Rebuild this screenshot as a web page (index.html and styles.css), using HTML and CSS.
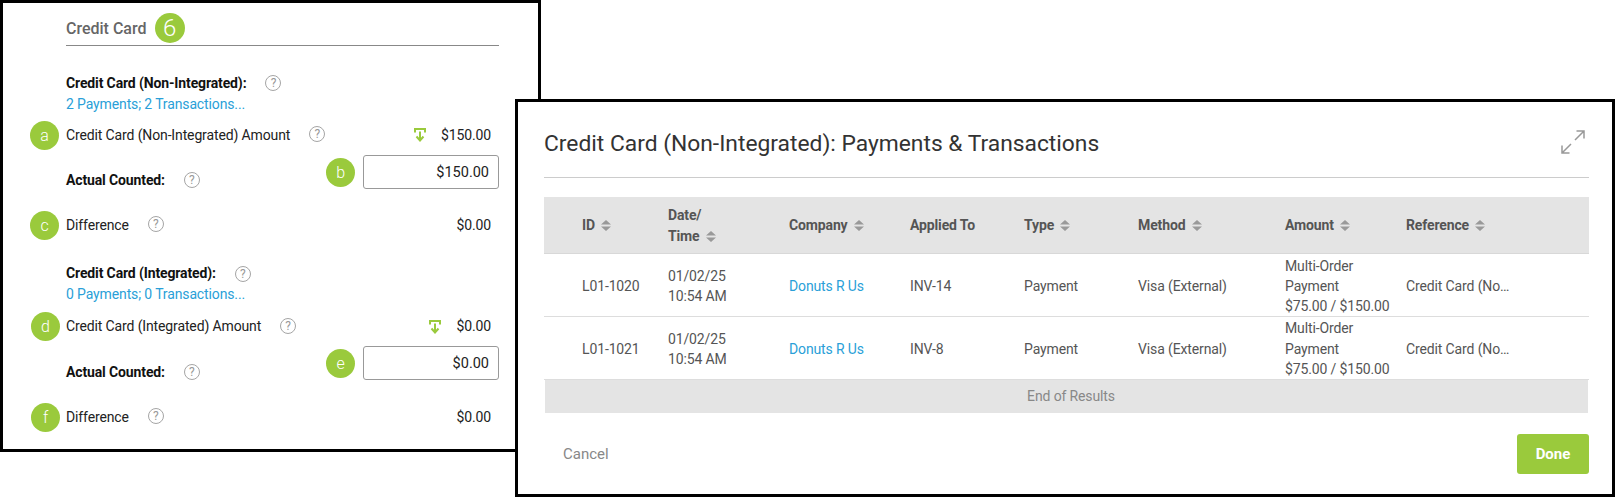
FILE: index.html
```html
<!DOCTYPE html>
<html lang="en">
<head>
  <meta charset="UTF-8" />
  <title>Credit Card Payments</title>
  <link rel="stylesheet" href="styles.css">
</head>
<body>

  <svg class="defs" width="0" height="0">
    <symbol id="sort" viewBox="0 0 10 11">
      <path d="M5 0 L10 4.6 H0 Z M0 6.4 H10 L5 11 Z" />
    </symbol>
    <symbol id="pull" viewBox="0 0 12 14">
      <path d="M1 4.5 V1 H11 V4.5 M6 3.5 V12 M2.5 8.5 L6 12.5 L9.5 8.5" />
    </symbol>
  </svg>

  <!-- Credit card section -->
  <section class="panel">
    <div class="section-title">
      <h2>Credit Card</h2>
      <span class="badge badge-big">6</span>
    </div>

    <div class="group">
      <div class="head">Credit Card (Non-Integrated): <span class="help">?</span></div>
      <a class="link" href="#">2 Payments; 2 Transactions...</a>
      <div class="row amount-row">
        <div class="label-side">
          <span class="badge">a</span>
          <span>Credit Card (Non-Integrated) Amount</span>
          <span class="help">?</span>
        </div>
        <div class="value"><svg class="pull"><use href="#pull" /></svg>$150.00</div>
      </div>
      <div class="row count-row">
        <div class="head count-label">Actual Counted: <span class="help">?</span></div>
        <div class="count-side">
          <span class="badge">b</span>
          <input class="count-input" type="text" value="$150.00" />
        </div>
      </div>
      <div class="row diff-row">
        <div class="label-side">
          <span class="badge">c</span>
          <span>Difference</span>
          <span class="help">?</span>
        </div>
        <div class="value">$0.00</div>
      </div>
    </div>

    <div class="group group-second">
      <div class="head">Credit Card (Integrated): <span class="help">?</span></div>
      <a class="link" href="#">0 Payments; 0 Transactions...</a>
      <div class="row amount-row">
        <div class="label-side">
          <span class="badge">d</span>
          <span>Credit Card (Integrated) Amount</span>
          <span class="help">?</span>
        </div>
        <div class="value"><svg class="pull"><use href="#pull" /></svg>$0.00</div>
      </div>
      <div class="row count-row">
        <div class="head count-label">Actual Counted: <span class="help">?</span></div>
        <div class="count-side">
          <span class="badge">e</span>
          <input class="count-input" type="text" value="$0.00" />
        </div>
      </div>
      <div class="row diff-row">
        <div class="label-side">
          <span class="badge">f</span>
          <span>Difference</span>
          <span class="help">?</span>
        </div>
        <div class="value">$0.00</div>
      </div>
    </div>
  </section>

  <!-- Payments modal -->
  <section class="modal">
    <div class="modal-head">
      <h1>Credit Card (Non-Integrated): Payments &amp; Transactions</h1>
      <svg class="expand" viewBox="0 0 24 24">
        <path d="M14 10 L23 1 M15.5 1 H23 V8.5 M10 14 L1 23 M1 15.5 V23 H8.5" />
      </svg>
    </div>

    <table class="results">
      <colgroup>
        <col class="c-id"><col class="c-date"><col class="c-company"><col class="c-applied">
        <col class="c-type"><col class="c-method"><col class="c-amount"><col class="c-ref">
      </colgroup>
      <thead>
        <tr>
          <th>ID <svg class="sort"><use href="#sort" /></svg></th>
          <th>Date/<br>Time <svg class="sort"><use href="#sort" /></svg></th>
          <th>Company <svg class="sort"><use href="#sort" /></svg></th>
          <th>Applied To</th>
          <th>Type <svg class="sort"><use href="#sort" /></svg></th>
          <th>Method <svg class="sort"><use href="#sort" /></svg></th>
          <th>Amount <svg class="sort"><use href="#sort" /></svg></th>
          <th>Reference <svg class="sort"><use href="#sort" /></svg></th>
        </tr>
      </thead>
      <tbody>
        <tr>
          <td>L01-1020</td>
          <td>01/02/25<br>10:54 AM</td>
          <td><a class="link" href="#">Donuts R Us</a></td>
          <td>INV-14</td>
          <td>Payment</td>
          <td>Visa (External)</td>
          <td>Multi-Order<br>Payment<br>$75.00 / $150.00</td>
          <td>Credit Card (No…</td>
        </tr>
        <tr>
          <td>L01-1021</td>
          <td>01/02/25<br>10:54 AM</td>
          <td><a class="link" href="#">Donuts R Us</a></td>
          <td>INV-8</td>
          <td>Payment</td>
          <td>Visa (External)</td>
          <td>Multi-Order<br>Payment<br>$75.00 / $150.00</td>
          <td>Credit Card (No…</td>
        </tr>
      </tbody>
    </table>
    <div class="end-results">End of Results</div>

    <div class="modal-foot">
      <button class="cancel">Cancel</button>
      <button class="done">Done</button>
    </div>
  </section>

</body>
</html>
```

FILE: styles.css
```css
* {
  box-sizing: border-box;
  margin: 0;
  padding: 0;
  font-family: 'Roboto', sans-serif;
}

body {
  background: #fff;
  width: 1615px;
  height: 497px;
  position: relative;
  overflow: hidden;
  font-size: 14px;
  letter-spacing: -0.13px;
  line-height: 21px;
  color: #222;
}

.defs {
  position: absolute;
}

a {
  text-decoration: none;
}

.link {
  color: #2a9fd8;
}

/* Left panel */
.panel {
  position: absolute;
  left: 0;
  top: 0;
  width: 541px;
  height: 452px;
  background: #fff;
  border: 3px solid #000;
  padding: 10px 39px 0 63px;
}

.section-title {
  display: flex;
  align-items: center;
  gap: 8px;
  height: 33px;
  padding-bottom: 2px;
  border-bottom: 1px solid #888;
}

.section-title h2 {
  font-size: 16px;
  font-weight: 500;
  letter-spacing: 0;
  color: #666;
}

.badge {
  flex: none;
  display: flex;
  align-items: center;
  justify-content: center;
  width: 29px;
  height: 29px;
  border-radius: 50%;
  background: #9aca3c;
  color: #fff;
  font-size: 16px;
  font-weight: 300;
}

.badge-big {
  width: 30px;
  height: 30px;
  font-size: 24px;
}

.group {
  margin-top: 26.5px;
}

.group-second {
  margin-top: 27.5px;
}

.head {
  font-weight: 700;
  color: #111;
  display: flex;
  align-items: center;
  gap: 19px;
  height: 21px;
}

.group > .link {
  display: block;
  height: 21px;
}

.help {
  flex: none;
  display: flex;
  align-items: center;
  justify-content: center;
  width: 16px;
  height: 16px;
  border: 1.5px solid #a5a5a5;
  border-radius: 50%;
  color: #999;
  font-size: 12px;
  font-weight: 400;
  line-height: 1;
}

.row {
  display: flex;
  justify-content: space-between;
}

.amount-row {
  margin-top: 10px;
  align-items: center;
  height: 21px;
}

.count-row {
  margin-top: 9.5px;
  height: 34px;
}

.diff-row {
  margin-top: 25.5px;
  align-items: center;
  height: 21px;
}

.group-second .amount-row {
  margin-top: 11px;
}

.group-second .count-row {
  margin-top: 9px;
}

.group-second .count-label {
  margin-top: 15.5px;
}

.group-second .diff-row {
  margin-top: 26.5px;
}

.label-side {
  display: flex;
  align-items: center;
  margin-left: -36px;
}

.label-side .badge {
  margin-right: 7px;
}

.label-side .help {
  margin-left: 19px;
  margin-top: -2px;
}

.group-second .label-side {
  margin-left: -35px;
}

.group-second .label-side .badge {
  margin-right: 6px;
}

.count-label {
  margin-top: 14.5px;
}

.count-side {
  display: flex;
  align-items: center;
  gap: 8px;
}

.count-input {
  width: 136px;
  height: 34px;
  border: 1px solid #999;
  border-radius: 3px;
  padding: 0 9px;
  text-align: right;
  font-size: 14.5px;
  color: #222;
  background: #fff;
}

.value {
  display: flex;
  align-items: center;
  padding-right: 8px;
}

.pull {
  width: 12px;
  height: 14px;
  margin-right: 15px;
  fill: none;
  stroke: #9aca3c;
  stroke-width: 2;
}

/* Modal */
.modal {
  position: absolute;
  left: 515px;
  top: 99px;
  width: 1100px;
  height: 398px;
  background: #fff;
  border: 3px solid #000;
  padding: 0 23px 0 26px;
  color: #555;
}

.modal-head {
  display: flex;
  justify-content: space-between;
  align-items: center;
  height: 76px;
  padding: 8px 4px 0 0;
  border-bottom: 1px solid #ccc;
}

.modal-head h1 {
  font-size: 22.8px;
  font-weight: 400;
  letter-spacing: 0;
  color: #333;
}

.expand {
  width: 24px;
  height: 24px;
  margin-top: -3px;
  fill: none;
  stroke: #999;
  stroke-width: 1.5;
}

.results {
  width: 1045px;
  margin-top: 19px;
  table-layout: fixed;
  border-collapse: collapse;
}

.c-id { width: 124px; }
.c-date { width: 121px; }
.c-company { width: 121px; }
.c-applied { width: 114px; }
.c-type { width: 114px; }
.c-method { width: 147px; }
.c-amount { width: 121px; }
.c-ref { width: 183px; }

.results th {
  height: 56px;
  padding-top: 2px;
  background: #e4e4e4;
  border-bottom: 1px solid #d8d8d8;
  text-align: left;
  font-weight: 700;
  color: #555;
}

.results td {
  padding-top: 2px;
  line-height: 20.33px;
  border-bottom: 1px solid #ddd;
}

.results tbody tr:last-child td {
  padding-top: 1px;
}

.results th:first-child,
.results td:first-child {
  padding-left: 38px;
}

.sort {
  width: 10px;
  height: 11px;
  margin-left: 3px;
  vertical-align: -1px;
  fill: #999;
}

.end-results {
  width: 1043px;
  margin-left: 1px;
  height: 33px;
  line-height: 33px;
  padding-left: 9px;
  background: #e4e4e4;
  color: #888;
  text-align: center;
}

.modal-foot {
  display: flex;
  justify-content: space-between;
  align-items: center;
  margin-top: 21px;
}

button {
  border: none;
  font-size: 15px;
  cursor: pointer;
}

.cancel {
  margin-left: 19px;
  background: none;
  color: #888;
}

.done {
  width: 72px;
  height: 40px;
  background: #9aca3c;
  color: #fff;
  font-weight: 700;
  border-radius: 3px;
}
```
